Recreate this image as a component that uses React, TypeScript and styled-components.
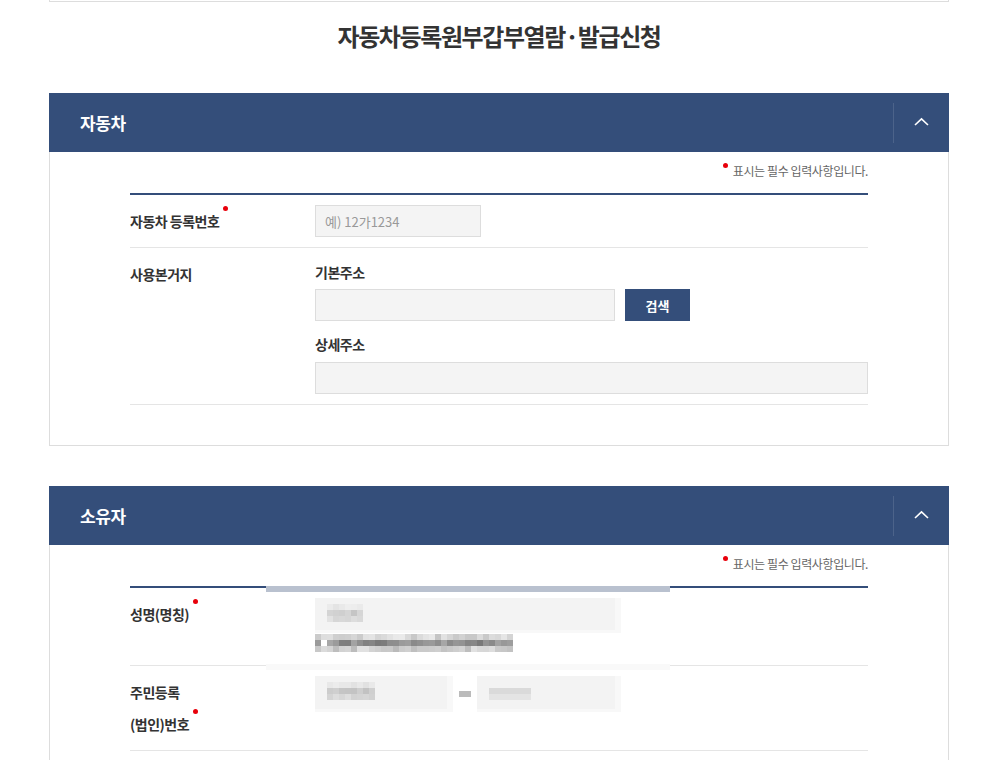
import React from 'react'
import styled, { createGlobalStyle } from 'styled-components'

const NAVY = '#344e7a'

const GlobalStyle = createGlobalStyle`
    body {
        margin: 0;
        background: #fff;
        font-family: 'Noto Sans CJK KR', 'Noto Sans', sans-serif;
        color: #333;
    }
`

// pseudo random grey so the mosaic looks the same on every load
const grey = (seed: number, min: number, max: number) => {
    const r = Math.abs(Math.sin(seed * 12.9898) * 43758.5453) % 1
    const v = Math.round(min + r * (max - min))
    return `rgb(${v},${v},${v})`
}

type BlocksProps = { cols: number; rows: number; seed: number; ranges: [number, number][]; whiteAt?: number }

const Blocks = ({ cols, rows, seed, ranges, whiteAt }: BlocksProps) => (
    <svg width={cols * 6} height={rows * 6} style={{ display: 'block' }}>
        {Array.from({ length: rows }).map((_, r) =>
            Array.from({ length: cols }).map((__, c) => {
                const [min, max] = ranges[r]
                let fill = grey(seed + r * 97 + c * 7, min, max)
                if (whiteAt !== undefined && r === 1 && c === whiteAt) fill = '#fff'
                return <rect key={`${r}-${c}`} x={c * 6} y={r * 6} width={6} height={6} fill={fill} />
            })
        )}
    </svg>
)

const Chevron = () => (
    <svg width='15' height='9' viewBox='0 0 15 9'>
        <path d='M1 8 L7.5 1.8 L14 8' fill='none' stroke='#fff' strokeWidth='1.6' />
    </svg>
)

const App = () => {
    return (
        <>
            <GlobalStyle />
            <Page>
                <TopStub />
                <PageTitle>자동차등록원부갑부열람·발급신청</PageTitle>

                <Section>
                    <SectionHeader>
                        <SectionTitle>자동차</SectionTitle>
                        <ToggleButton aria-label='접기'><Chevron /></ToggleButton>
                    </SectionHeader>
                    <SectionBody>
                        <Note><NoteDot />표시는 필수 입력사항입니다.</Note>
                        <Table>
                            <Row>
                                <Label>자동차 등록번호<Dot /></Label>
                                <Field>
                                    <TextInput $width={166} placeholder='예) 12가1234' />
                                </Field>
                            </Row>
                            <Row>
                                <Label>사용본거지</Label>
                                <Field>
                                    <SubLabel $top={4}>기본주소</SubLabel>
                                    <InlineGroup>
                                        <TextInput $width={300} />
                                        <SearchButton>검색</SearchButton>
                                    </InlineGroup>
                                    <SubLabel $top={13}>상세주소</SubLabel>
                                    <TextInput $top={8} />
                                </Field>
                            </Row>
                        </Table>
                    </SectionBody>
                </Section>

                <Section>
                    <SectionHeader>
                        <SectionTitle>소유자</SectionTitle>
                        <ToggleButton aria-label='접기'><Chevron /></ToggleButton>
                    </SectionHeader>
                    <SectionBody>
                        <Note><NoteDot />표시는 필수 입력사항입니다.</Note>
                        <Table>
                            <Redact width='404' height='84'>
                                <rect x='0' y='0' width='404' height='6' fill='#b9c1cf' />
                                <rect x='0' y='78' width='404' height='6' fill='#f9f9f9' />
                            </Redact>
                            <Row $bottom={13}>
                                <Label>성명(명칭)<Dot /></Label>
                                <Field>
                                    <MosaicBox $width={306} $height={35}>
                                        <Blocks cols={6} rows={3} seed={3} ranges={[[228, 240], [196, 218], [212, 230]]} />
                                    </MosaicBox>
                                    <MosaicLine>
                                        <Blocks cols={33} rows={3} seed={11} whiteAt={1} ranges={[[196, 236], [120, 168], [186, 226]]} />
                                    </MosaicLine>
                                </Field>
                            </Row>
                            <Row>
                                <Label>주민등록<br />(법인)번호<Dot /></Label>
                                <Field>
                                    <InlineGroup $gap={6}>
                                        <MosaicBox $width={138} $height={36}>
                                            <Blocks cols={8} rows={3} seed={21} ranges={[[225, 238], [192, 212], [208, 226]]} />
                                        </MosaicBox>
                                        <Dash />
                                        <MosaicBox $width={144} $height={36} $light>
                                            <LightBar />
                                        </MosaicBox>
                                    </InlineGroup>
                                </Field>
                            </Row>
                        </Table>
                    </SectionBody>
                </Section>
            </Page>
        </>
    )
}

export default App

const Page = styled.div`
    width: 900px;
    margin-left: 49px;
`

const TopStub = styled.div`
    height: 1px;
    border: 1px solid #ddd;
    border-top: none;
`

const PageTitle = styled.h2`
    margin: 0 0 41px;
    padding-top: 18px;
    text-align: center;
    font-size: 24px;
    line-height: 32px;
    letter-spacing: -1.4px;
    font-weight: 700;
    color: #333;
`

const Section = styled.section`
    margin-bottom: 40px;
`

const SectionHeader = styled.div`
    height: 59px;
    background: ${NAVY};
    display: flex;
    align-items: center;
    padding-left: 31px;
`

const SectionTitle = styled.h3`
    flex: 1;
    margin: 0;
    font-size: 17px;
    letter-spacing: -0.4px;
    font-weight: 700;
    color: #fff;
`

const ToggleButton = styled.button`
    box-sizing: border-box;
    width: 56px;
    height: 40px;
    padding: 0 0 2px;
    border: none;
    border-left: 1px solid rgba(255, 255, 255, 0.12);
    background: none;
    display: flex;
    align-items: center;
    justify-content: center;
    cursor: pointer;
`

const SectionBody = styled.div`
    border: 1px solid #ddd;
    border-top: none;
    padding: 10px 80px 40px;
`

const Note = styled.p`
    margin: 0 0 13px;
    display: flex;
    justify-content: flex-end;
    align-items: flex-start;
    font-size: 12px;
    line-height: 18px;
    letter-spacing: -0.4px;
    color: #666;
`

const NoteDot = styled.span`
    width: 5px;
    height: 5px;
    margin: 1px 5px 0 0;
    border-radius: 50%;
    background: #e8000b;
`

const Dot = styled.span`
    display: inline-block;
    width: 5px;
    height: 5px;
    margin: 1px 0 0 4px;
    border-radius: 50%;
    background: #e8000b;
    vertical-align: top;
`

const Table = styled.div`
    position: relative;
    border-top: 2px solid ${NAVY};
`

const Redact = styled.svg`
    position: absolute;
    left: 136px;
    top: -2px;
    z-index: 2;
`

const Row = styled.div<{ $bottom?: number }>`
    display: flex;
    align-items: flex-start;
    padding: 10px 0 ${p => p.$bottom ?? 10}px;
    border-bottom: 1px solid #e5e5e5;
`

const Label = styled.div`
    width: 185px;
    flex-shrink: 0;
    font-size: 14px;
    line-height: 32px;
    font-weight: 700;
    letter-spacing: -0.5px;
    color: #333;
`

const Field = styled.div`
    flex: 1;
`

const SubLabel = styled.div<{ $top: number }>`
    margin: ${p => p.$top}px 0 7px;
    font-size: 14px;
    line-height: 20px;
    font-weight: 700;
    letter-spacing: -0.5px;
    color: #333;
`

const InlineGroup = styled.div<{ $gap?: number }>`
    display: flex;
    align-items: center;
    gap: ${p => p.$gap ?? 10}px;
`

const TextInput = styled.input<{ $width?: number; $top?: number }>`
    box-sizing: border-box;
    display: block;
    width: ${p => (p.$width ? `${p.$width}px` : '100%')};
    height: 32px;
    margin-top: ${p => p.$top ?? 0}px;
    padding: 0 9px;
    border: 1px solid #ddd;
    background: #f4f4f4;
    font-family: inherit;
    font-size: 13px;
    color: #333;
    outline: none;

    &::placeholder {
        color: #999;
    }
`

const SearchButton = styled.button`
    width: 65px;
    height: 32px;
    border: none;
    background: ${NAVY};
    color: #fff;
    font-family: inherit;
    font-size: 13px;
    font-weight: 700;
    cursor: pointer;
`

const MosaicBox = styled.div<{ $width: number; $height: number; $light?: boolean }>`
    box-sizing: border-box;
    width: ${p => p.$width}px;
    height: ${p => p.$height}px;
    padding: ${p => (p.$light ? '12px' : '6px')} 12px 0;
    background: #f3f3f3;
    box-shadow: inset -6px -3px 0 #f8f8f8;
`

const MosaicLine = styled.div`
    margin-top: 1px;
`

const Dash = styled.span`
    width: 12px;
    height: 6px;
    background: #bbb;
`

const LightBar = styled.div`
    width: 42px;
    height: 12px;
    background: linear-gradient(#dadada 0 6px, #e4e4e4 6px);
`
